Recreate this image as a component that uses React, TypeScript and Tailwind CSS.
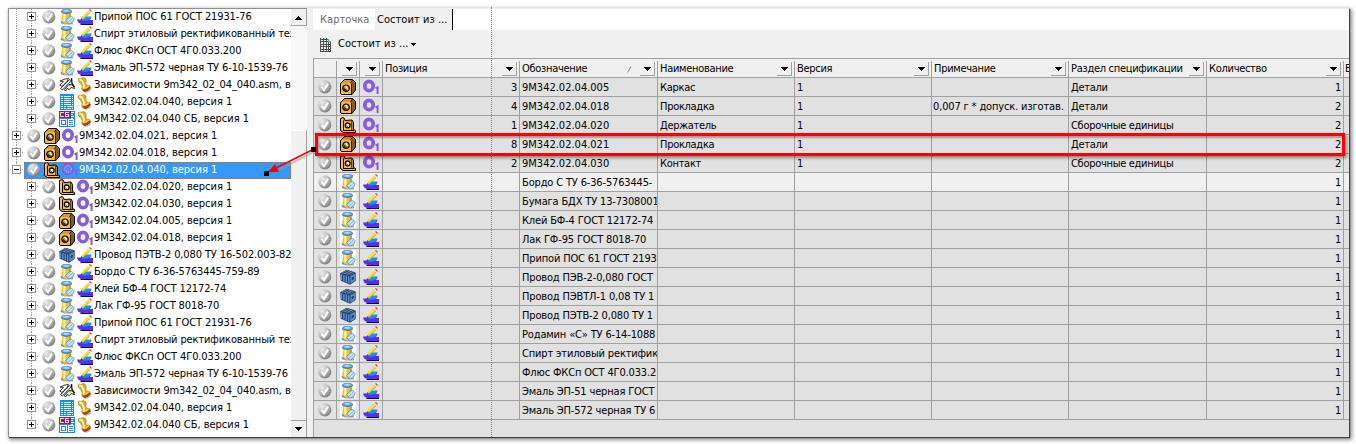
import React from "react";

type Kind = "part" | "asm" | "can" | "wire" | "link" | "spec" | "sb";
type Mark = "o1" | "pencil" | "stamp";

function Sphere() {
  return (
    <svg width="14" height="14" viewBox="0 0 14 14" className="block shrink-0">
      <defs>
        <radialGradient id="ball" cx="0.3" cy="0.25" r="0.85">
          <stop offset="0" stopColor="#ececec" />
          <stop offset="0.5" stopColor="#bebebe" />
          <stop offset="1" stopColor="#747474" />
        </radialGradient>
      </defs>
      <circle cx="6.8" cy="6.8" r="6.6" fill="url(#ball)" />
      <path d="M3.6 7 L6 10 L10 3.6" fill="none" stroke="#fff" strokeWidth="2" />
    </svg>
  );
}

function PartIcon() {
  return (
    <svg width="16" height="16" viewBox="0 0 16 16" className="block shrink-0">
      <path d="M1.5 3.5L4.5 .5H12.5L15.5 3.5V11L12 15.5H1.5L.5 14.5V4.5Z" fill="#8c5a1e" stroke="#000" />
      <path d="M4.8 1H12L10.3 4H1.8Z" fill="#d9983a" />
      <path d="M1 5L2 4H10L11 5V14L10.5 15H2L1 14Z" fill="#ffb83a" />
      <path d="M11.5 5V15M10.5 4L12.5 1" stroke="#000" strokeWidth=".7" />
      <circle cx="6" cy="9.2" r="3.2" fill="#c79550" stroke="#000" strokeWidth="1.2" />
      <path d="M3.6 8.5A3 3 0 0 0 7.6 11.8Z" fill="#3c2509" />
      <path d="M5.7 7L7.8 9.8" stroke="#fff" strokeWidth="1.3" />
    </svg>
  );
}

function AsmIcon() {
  return (
    <svg width="16" height="16" viewBox="0 0 16 16" className="block shrink-0">
      <path d="M.5 1.5V13.5L3 15.5H15.5V13.5L13.5 12.5V5.5L12 3L5 3.5L4.5 1.5L3 .5Z" fill="#d98f28" stroke="#000" />
      <path d="M1 2.3L3.2 1.5V13.6L1 12.8Z" fill="#ffc04a" />
      <path d="M4 4.5H11.2V13H4Z" fill="#ffb83a" />
      <path d="M3.5 3.5V13.5H14" fill="none" stroke="#000" />
      <path d="M3 14.5H14.5" stroke="#ffb83a" />
      <path d="M11.7 4V13" stroke="#000" strokeWidth=".7" />
      <circle cx="7.7" cy="8.4" r="2.4" fill="#fff" stroke="#000" strokeWidth="1.3" />
      <path d="M6.4 8.4L7.9 10" stroke="#8b5716" />
    </svg>
  );
}

function CanIcon({ boxed }: { boxed?: boolean }) {
  return (
    <svg width="16" height="16" viewBox="0 0 16 16" className="block shrink-0">
      {boxed && <rect width="16" height="16" fill="#fff" />}
      <path d="M3 13.5H14V15.5H5Z" fill="#a9a9a9" />
      <path d="M2.5 3L3.3 6L2.5 9V13Q5 15 8 14.5L12 12L11.6 6L12.5 3Z" fill="#f2c035" />
      <path d="M4.3 4.5V12.5H6.5V4.5Z" fill="#fff2ae" />
      <path d="M10 4.5V8H11.7V4.5Z" fill="#cf9614" />
      <path d="M2.3 2V3.6Q7.5 6.4 12.7 3.6V2Z" fill="#3f83c8" />
      <ellipse cx="7.5" cy="2.1" rx="5.2" ry="1.9" fill="#66abe8" stroke="#2b6cae" strokeWidth=".5" />
      <ellipse cx="7.2" cy="1.9" rx="3" ry=".8" fill="#b4dcf8" />
      <path d="M6.5 11.5L11 7Q13.5 7.8 15.3 9.5Q15 12 12.3 14.3L9.5 15Z" fill="#9ccbf0" stroke="#497fa9" strokeWidth=".6" />
      <path d="M8.2 12.4L12.8 8.2M10.2 14L14.5 9.9" stroke="#e8f6ff" strokeWidth="1" />
      <path d="M1.5 11.5L5.5 14.5H2.3Z" fill="#4b8ecb" />
    </svg>
  );
}

function WireIcon() {
  return (
    <svg width="16" height="16" viewBox="0 0 16 16" className="block shrink-0">
      <path d="M.2 4.2L6.5 .7L15.7 3.4V12L10 15.8L.8 11.8Z" fill="#213f6c" />
      <path d="M1 4.2L7.2 1L15 3.4L9.8 6Z" fill="#6f8cb2" />
      <path d="M3 4.4L9 1.5M6 5L11.5 2.2M8.6 5.8L14 3" stroke="#26395a" strokeWidth=".9" />
      <path d="M1.5 5.2V11.3M3.9 6V12.4M6.3 6.6V13.4M8.7 7.2V14.4" stroke="#5c9ad8" strokeWidth="1.3" />
      <path d="M10.4 7L15 4.7V11.8L10.4 14.8Z" fill="#5b8cc2" />
      <path d="M11.7 8.8L13.8 7.7V10L11.7 11.4Z" fill="#1d3560" />
    </svg>
  );
}

function LinkIcon() {
  return (
    <svg width="16" height="16" viewBox="0 0 16 16" className="block shrink-0">
      <path d="M1 4L6 2L9.5 1.5L8 4.5L3 9.5L.8 8L4.5 4.5Z" fill="#fff" stroke="#222" strokeWidth=".9" />
      <path d="M1.5 11.5L10.5 2.5L12.3 3.8L3.5 13Z" fill="#e3e3e3" stroke="#222" strokeWidth=".9" />
      <path d="M5.5 12.5L10 7.5L14 8L15.5 11.5L12 10.5L10.5 12.5L8 11.5L6.5 14Z" fill="#fff" stroke="#111" strokeWidth=".9" />
      <path d="M9 9L12.5 7.5L12 9.5Z" fill="#d99a22" />
      <path d="M12.5 1L13 6.5L15.5 10" fill="none" stroke="#111" strokeWidth="1.3" />
    </svg>
  );
}

function SpecIcon() {
  return (
    <svg width="16" height="16" viewBox="0 0 16 16" className="block shrink-0" shapeRendering="crispEdges">
      <rect x="1" y="0" width="14" height="16" fill="#108cff" />
      <path d="M2 2.5H4M5 2.5H12M13 2.5H14M2 4.5H4M5 4.5H12M13 4.5H14M2 6.5H4M5 6.5H12M13 6.5H14M2 8.5H4M5 8.5H12M13 8.5H14M2 10.5H4M5 10.5H12M13 10.5H14M2 12.5H4M5 12.5H7M8 12.5H14M2 14.5H4M5 14.5H7M8 14.5H12M13 14.5H14" stroke="#fff" />
    </svg>
  );
}

function SbIcon() {
  return (
    <svg width="16" height="16" viewBox="0 0 16 16" className="block shrink-0" shapeRendering="crispEdges">
      <rect width="16" height="16" fill="#108cff" />
      <rect x="1" y="8" width="14" height="7" fill="#fff" />
      <path d="M12 1.5H15M12 3.5H14M12 5.5H15M12 7.5H14" stroke="#fff" />
      <path d="M2.5 9.5H6.5V13.5H2.5ZM8.5 8V15M10 9.5H14M10 11.5H14M10 13.5H14" fill="none" stroke="#108cff" />
      <rect width="12" height="7" fill="#7a14d8" />
      <path d="M5 1.5H1.5V5.5H5M10 1.5H6.5V5.5H9.5V3.5H7" fill="none" stroke="#ffef3d" />
    </svg>
  );
}

function O1Icon({ ghost }: { ghost?: boolean }) {
  return (
    <svg width="16" height="16" viewBox="0 0 16 16" className="block shrink-0">
      <ellipse cx="6" cy="7" rx="4.2" ry="4.7" fill="none" stroke="#875ce0" strokeWidth="3.7" />
      {ghost && <circle cx="6" cy="7" r="3.4" fill="none" stroke="#d3dcff" strokeWidth="1" strokeDasharray="1 1" />}
      <path d="M12.6 9.4L14.6 8.4V15" fill="none" stroke="#875ce0" strokeWidth="2" />
    </svg>
  );
}

function PencilIcon() {
  return (
    <svg width="16" height="16" viewBox="0 0 16 16" className="block shrink-0">
      <path d="M0 10.5H4L7 8H14.5L13 11H16V15H4Q.5 14 0 10.5Z" fill="#5a2df2" />
      <path d="M4 11L6.5 7.5H14.5L12.5 10.8Q8 12.5 4 11Z" fill="#0d94ff" />
      <path d="M3 15H16V16H4Z" fill="#0b0640" />
      <path d="M4 10.4L5.4 7.5L11.3 1.6L13.2 3.4L7.2 9.4Z" fill="#ffcf10" />
      <path d="M6.2 8L12 2.4" stroke="#fff07b" strokeWidth=".8" />
      <path d="M7.2 9.4L13.2 3.4" stroke="#a97800" strokeWidth=".5" />
      <path d="M11.9 1.1L13 0L15 1.9L13.9 3Z" fill="#e04a30" />
      <path d="M11.2 1.8L11.9 1.1L14 3L13.3 3.7Z" fill="#e8e8e8" />
      <path d="M3.6 11L4.4 9.2L5.5 10.3Z" fill="#222" />
    </svg>
  );
}

function StampIcon() {
  return (
    <svg width="16" height="16" viewBox="0 0 16 16" className="block shrink-0">
      <path d="M4.5 14L13 10L14 14L9 16Z" fill="#c6c6c6" />
      <path d="M1 2Q2 .4 4 1.2Q6.5 -.4 8.6 1.6Q10 4.2 8.8 6L9.8 8L12.8 8.6L13.5 11L8 14.8L4.6 12.5L5 9.2L3.6 6.4Q.5 5 1 2Z" fill="#e0ab22" stroke="#8f640a" strokeWidth=".4" />
      <path d="M2.2 2.4Q5 2.4 5.8 5L7 8.5L6.4 11" fill="none" stroke="#fff3ad" strokeWidth="2" />
      <path d="M4.8 12.4Q9.5 12.8 13 9.2L13.8 11.3Q11 14.8 7.8 15Z" fill="#b03a18" />
      <path d="M6 11.4Q9.5 11.2 11.6 9.2" fill="none" stroke="#ffe06a" />
    </svg>
  );
}

function KindIcon({ kind, boxed }: { kind: Kind; boxed?: boolean }) {
  if (kind === "part") return <PartIcon />;
  if (kind === "asm") return <AsmIcon />;
  if (kind === "can") return <CanIcon boxed={boxed} />;
  if (kind === "wire") return <WireIcon />;
  if (kind === "link") return <LinkIcon />;
  if (kind === "spec") return <SpecIcon />;
  return <SbIcon />;
}

function MarkIcon({ mark, ghost }: { mark: Mark; ghost?: boolean }) {
  if (mark === "o1") return <O1Icon ghost={ghost} />;
  if (mark === "pencil") return <PencilIcon />;
  return <StampIcon />;
}

type Node = { text: string; kind: Kind; mark: Mark; root?: boolean; open?: boolean };

const nodes: Node[] = [
  { text: "Припой ПОС 61 ГОСТ 21931-76", kind: "can", mark: "pencil" },
  { text: "Спирт этиловый ректификованный тех", kind: "can", mark: "pencil" },
  { text: "Флюс ФКСп ОСТ 4Г0.033.200", kind: "can", mark: "pencil" },
  { text: "Эмаль ЭП-572 черная ТУ 6-10-1539-76", kind: "can", mark: "pencil" },
  { text: "Зависимости 9m342_02_04_040.asm, ве", kind: "link", mark: "stamp" },
  { text: "9М342.02.04.040, версия 1", kind: "spec", mark: "stamp" },
  { text: "9М342.02.04.040 СБ, версия 1", kind: "sb", mark: "stamp" },
  { text: "9М342.02.04.021, версия 1", kind: "part", mark: "o1", root: true },
  { text: "9М342.02.04.018, версия 1", kind: "part", mark: "o1", root: true },
  { text: "9М342.02.04.040, версия 1", kind: "asm", mark: "o1", root: true, open: true },
  { text: "9М342.02.04.020, версия 1", kind: "asm", mark: "o1" },
  { text: "9М342.02.04.030, версия 1", kind: "asm", mark: "o1" },
  { text: "9М342.02.04.005, версия 1", kind: "part", mark: "o1" },
  { text: "9М342.02.04.018, версия 1", kind: "part", mark: "o1" },
  { text: "Провод ПЭТВ-2 0,080 ТУ 16-502.003-82", kind: "wire", mark: "pencil" },
  { text: "Бордо С ТУ 6-36-5763445-759-89", kind: "can", mark: "pencil" },
  { text: "Клей БФ-4 ГОСТ 12172-74", kind: "can", mark: "pencil" },
  { text: "Лак ГФ-95 ГОСТ 8018-70", kind: "can", mark: "pencil" },
  { text: "Припой ПОС 61 ГОСТ 21931-76", kind: "can", mark: "pencil" },
  { text: "Спирт этиловый ректификованный тех", kind: "can", mark: "pencil" },
  { text: "Флюс ФКСп ОСТ 4Г0.033.200", kind: "can", mark: "pencil" },
  { text: "Эмаль ЭП-572 черная ТУ 6-10-1539-76", kind: "can", mark: "pencil" },
  { text: "Зависимости 9m342_02_04_040.asm, ве", kind: "link", mark: "stamp" },
  { text: "9М342.02.04.040, версия 1", kind: "spec", mark: "stamp" },
  { text: "9М342.02.04.040 СБ, версия 1", kind: "sb", mark: "stamp" },
];

function Expander({ open }: { open?: boolean }) {
  return (
    <svg width="12" height="17" viewBox="0 0 12 17" className="block shrink-0" shapeRendering="crispEdges">
      <rect x=".5" y="3.5" width="8" height="8" fill="#fff" stroke="#919191" />
      <path d={open ? "M2 7.5H7" : "M2 7.5H7M4.5 5V10"} stroke="#000" />
      <path d="M10 7.5H11" stroke="#999" />
    </svg>
  );
}

function TreeRow({ node, index }: { node: Node; index: number }) {
  const vLine = "border-l border-dotted border-[#a0a0a0]";
  const tracking = node.text.startsWith("9М") ? "tracking-[-0.03px]" : "tracking-[-0.12px]";
  return (
    <div className="relative flex h-[17px] shrink-0">
      {node.root ? (
        <>
          <span className={"absolute left-[7px] top-0 " + vLine + (node.open ? " h-2" : " h-full")} />
          <div className="relative ml-[3px] flex">
            <Expander open={node.open} />
          </div>
        </>
      ) : (
        <>
          {index < 7 && <span className={"absolute left-[7px] top-0 h-full " + vLine} />}
          <span className={"absolute left-[22px] top-0 " + vLine + (index === 24 ? " h-2" : " h-full")} />
          <div className="relative ml-[18px] flex">
            <Expander />
          </div>
        </>
      )}
      <div
        className={
          node.open
            ? "flex grow items-start overflow-hidden bg-[#3399ff] text-white outline-1 -outline-offset-1 outline-dotted outline-[#cc6600]/70"
            : "flex grow items-start overflow-hidden"
        }
      >
        <div className="ml-[3px] flex items-center">
          <Sphere />
          <span className="w-[3px]" />
          <KindIcon kind={node.kind} />
          <span className="w-[2px]" />
          <MarkIcon mark={node.mark} ghost={node.open} />
        </div>
        <span className={"ml-px whitespace-nowrap leading-[15px] " + tracking}>{node.text}</span>
      </div>
    </div>
  );
}

function Arrow({ up }: { up?: boolean }) {
  return (
    <svg width="7" height="4" viewBox="0 0 7 4" className="block" shapeRendering="crispEdges">
      <path d={up ? "M3 0H4V1H5V2H6V3H7V4H0V3H1V2H2V1H3Z" : "M0 0H7V1H6V2H5V3H4V4H3V3H2V2H1V1H0Z"} fill="#000" />
    </svg>
  );
}

function ScrollBar() {
  return (
    <div className="flex w-4 shrink-0 flex-col bg-[#f8f8f8]">
      <div className="flex h-[17px] items-center justify-center border-r border-b border-[#a0a0a0] bg-[#f0f0f0] pt-px">
        <Arrow up />
      </div>
      <div className="h-[104px]" />
      <div className="grow border-t border-r border-t-white border-r-[#a0a0a0] bg-[#f0f0f0]" />
      <div className="flex h-[17px] items-center justify-center border-t border-r border-[#a0a0a0] bg-[#f0f0f0]">
        <Arrow />
      </div>
    </div>
  );
}

type Item = { kind: Kind; mark: Mark; pos?: string; code: string; name?: string; ver?: string; note?: string; part?: string; qty: string };

const items: Item[] = [
  { kind: "part", mark: "o1", pos: "3", code: "9М342.02.04.005", name: "Каркас", ver: "1", part: "Детали", qty: "1" },
  { kind: "part", mark: "o1", pos: "4", code: "9М342.02.04.018", name: "Прокладка", ver: "1", note: "0,007 г * допуск. изготав.", part: "Детали", qty: "2" },
  { kind: "asm", mark: "o1", pos: "1", code: "9М342.02.04.020", name: "Держатель", ver: "1", part: "Сборочные единицы", qty: "2" },
  { kind: "part", mark: "o1", pos: "8", code: "9М342.02.04.021", name: "Прокладка", ver: "1", part: "Детали", qty: "2" },
  { kind: "asm", mark: "o1", pos: "2", code: "9М342.02.04.030", name: "Контакт", ver: "1", part: "Сборочные единицы", qty: "2" },
  { kind: "can", mark: "pencil", code: "Бордо С ТУ 6-36-5763445-", qty: "1" },
  { kind: "can", mark: "pencil", code: "Бумага БДХ ТУ 13-7308001", qty: "1" },
  { kind: "can", mark: "pencil", code: "Клей БФ-4 ГОСТ 12172-74", qty: "1" },
  { kind: "can", mark: "pencil", code: "Лак ГФ-95 ГОСТ 8018-70", qty: "1" },
  { kind: "can", mark: "pencil", code: "Припой ПОС 61 ГОСТ 2193", qty: "1" },
  { kind: "wire", mark: "pencil", code: "Провод ПЭВ-2-0,080 ГОСТ", qty: "1" },
  { kind: "wire", mark: "pencil", code: "Провод ПЭВТЛ-1 0,08 ТУ 1", qty: "1" },
  { kind: "wire", mark: "pencil", code: "Провод ПЭТВ-2 0,080 ТУ 1", qty: "1" },
  { kind: "can", mark: "pencil", code: "Родамин «С» ТУ 6-14-1088", qty: "1" },
  { kind: "can", mark: "pencil", code: "Спирт этиловый ректифик", qty: "1" },
  { kind: "can", mark: "pencil", code: "Флюс ФКСп ОСТ 4Г0.033.2", qty: "1" },
  { kind: "can", mark: "pencil", code: "Эмаль ЭП-51 черная ГОСТ", qty: "1" },
  { kind: "can", mark: "pencil", code: "Эмаль ЭП-572 черная ТУ 6", qty: "1" },
];

const grid = "grid grid-cols-[23px_23px_23px_137px_138px_137px_137px_137px_138px_137px_1fr]";

function HeadCell({ title, filter = true, sort }: { title?: string; filter?: boolean; sort?: boolean }) {
  return (
    <div className="flex min-w-0 items-center overflow-hidden border-r border-[#a0a0a0] pr-[2px]">
      {title && <span className="ml-[2px] whitespace-nowrap">{title}</span>}
      <span className="grow" />
      {sort && (
        <svg width="5" height="7" viewBox="0 0 5 7" className="mr-2">
          <path d="M.5 6.5L4 .5" stroke="#888" />
        </svg>
      )}
      {filter && (
        <span className="flex h-[14px] w-[15px] shrink-0 items-center justify-center border-r border-b border-[#a0a0a0]">
          <Arrow />
        </span>
      )}
    </div>
  );
}

function Cell({ children, right, className = "" }: { children?: React.ReactNode; right?: boolean; className?: string }) {
  return (
    <div
      className={
        "flex min-w-0 items-center overflow-hidden border-r border-b border-[#a0a0a0] whitespace-nowrap " +
        (right ? "justify-end pr-[2px] " : "pl-[2px] ") +
        className
      }
    >
      <span className="leading-[17px]">{children}</span>
    </div>
  );
}

function IconCell({ children }: { children: React.ReactNode }) {
  return <div className="flex items-center justify-center overflow-hidden border-r border-b border-[#a0a0a0]">{children}</div>;
}

function Grid() {
  return (
    <div className="flex grow flex-col border-t border-l border-[#a0a0a0] bg-[#e1e1e1]">
      <div className={grid + " h-[19px] border-b border-[#a0a0a0] bg-[#f0f0f0] pt-[2px]"}>
        <HeadCell filter={false} />
        <HeadCell />
        <HeadCell />
        <HeadCell title="Позиция" />
        <HeadCell title="Обозначение" sort />
        <HeadCell title="Наименование" />
        <HeadCell title="Версия" />
        <HeadCell title="Примечание" />
        <HeadCell title="Раздел спецификации" />
        <HeadCell title="Количество" />
        <div className="overflow-hidden pl-px leading-[16px]">Е</div>
      </div>
      {items.map((it, i) => (
        <div key={i} className={grid + " h-[19px] shrink-0 " + (i === 5 ? "bg-[#f0f0f0]" : "")}>
          <IconCell><Sphere /></IconCell>
          <IconCell><KindIcon kind={it.kind} boxed /></IconCell>
          <IconCell><MarkIcon mark={it.mark} /></IconCell>
          <Cell right>{it.pos}</Cell>
          <Cell className={it.pos ? "tracking-[0px]" : "tracking-[-0.16px]"}>{it.code}</Cell>
          <Cell>{it.name}</Cell>
          <Cell>{it.ver}</Cell>
          <Cell className="-indent-px tracking-[-0.15px]">{it.note}</Cell>
          <Cell>{it.part}</Cell>
          <Cell right>{it.qty}</Cell>
          <div className="border-b border-[#a0a0a0]" />
        </div>
      ))}
    </div>
  );
}

export default function App() {
  return (
    <div className="relative h-[444px] w-[1356px] overflow-hidden bg-white p-2 font-['DejaVu_Sans_Condensed','DejaVu_Sans',sans-serif] text-[11px] font-stretch-condensed tracking-[-0.3px] text-black">
      <div className="flex h-[429px] w-[1341px] bg-[#f0f0f0] shadow-[1px_1px_1px_0px_#404040,2px_2px_4px_1px_#909090]">
        <div className="flex w-[299px] shrink-0 border-t border-l border-[#909090] bg-white">
          <div className="flex min-w-0 grow flex-col overflow-hidden">
            {nodes.map((n, i) => (
              <TreeRow key={i} node={n} index={i} />
            ))}
          </div>
          <ScrollBar />
        </div>
        <div className="w-[6px] shrink-0" />
        <div className="flex min-w-0 grow flex-col">
          <div className="mt-px flex h-[21px] bg-white">
            <div className="flex w-[62px] items-center pt-px pl-[7px] tracking-[0.05px] text-[#6d6d6d]">Карточка</div>
            <div className="flex w-[78px] items-center border-r border-black bg-[#f0f0f0] pt-px pl-[2px] tracking-[0.05px]">Состоит из ...</div>
          </div>
          <div className="flex h-7 items-center pt-px pl-[6px]">
            <svg width="13" height="14" viewBox="0 0 13 14" shapeRendering="crispEdges">
              <path d="M1 1H8V4H12V14H1Z" fill="#fff" />
              <path d="M1.5 0V14M4.5 0V14M7.5 0V14M11.5 3V14M1 1.5H9M1 3.5H12M1 6.5H12M1 8.5H12M1 11.5H12M1 13.5H12M9.5 1V14" stroke="#505050" />
              <path d="M9.5 1V3H12" fill="none" stroke="#35b6c0" />
            </svg>
            <span className="ml-[6px] tracking-[0.05px]">Состоит из ...</span>
            <svg width="5" height="3" viewBox="0 0 5 3" className="ml-[2px]" shapeRendering="crispEdges">
              <path d="M0 0H5V1H4V2H3V3H2V2H1V1H0Z" />
            </svg>
          </div>
          <Grid />
        </div>
      </div>
      <div className="absolute top-[7px] left-[491px] h-[430px] border-l border-dotted border-[#4a9ca0]" />
      <div className="absolute top-[133px] left-[315px] h-[23px] w-[1030px] border-3 border-[#fa0000] shadow-[2px_2px_3px_rgba(0,0,0,0.4),inset_1px_2px_2px_rgba(0,0,0,0.3)]" />
      <svg width="60" height="40" viewBox="0 0 60 40" className="absolute top-[141px] left-[260px]">
        <path d="M55 10L15 31" stroke="#999" strokeWidth="2" opacity=".5" />
        <path d="M53 8.5L12 29" stroke="#fa0000" strokeWidth="1.4" />
        <path d="M8 31L15 23L19 31Z" fill="#fa0000" />
        <path d="M51 6H56V11H51ZM4 30H9V35H4Z" fill="#000" />
      </svg>
    </div>
  );
}
